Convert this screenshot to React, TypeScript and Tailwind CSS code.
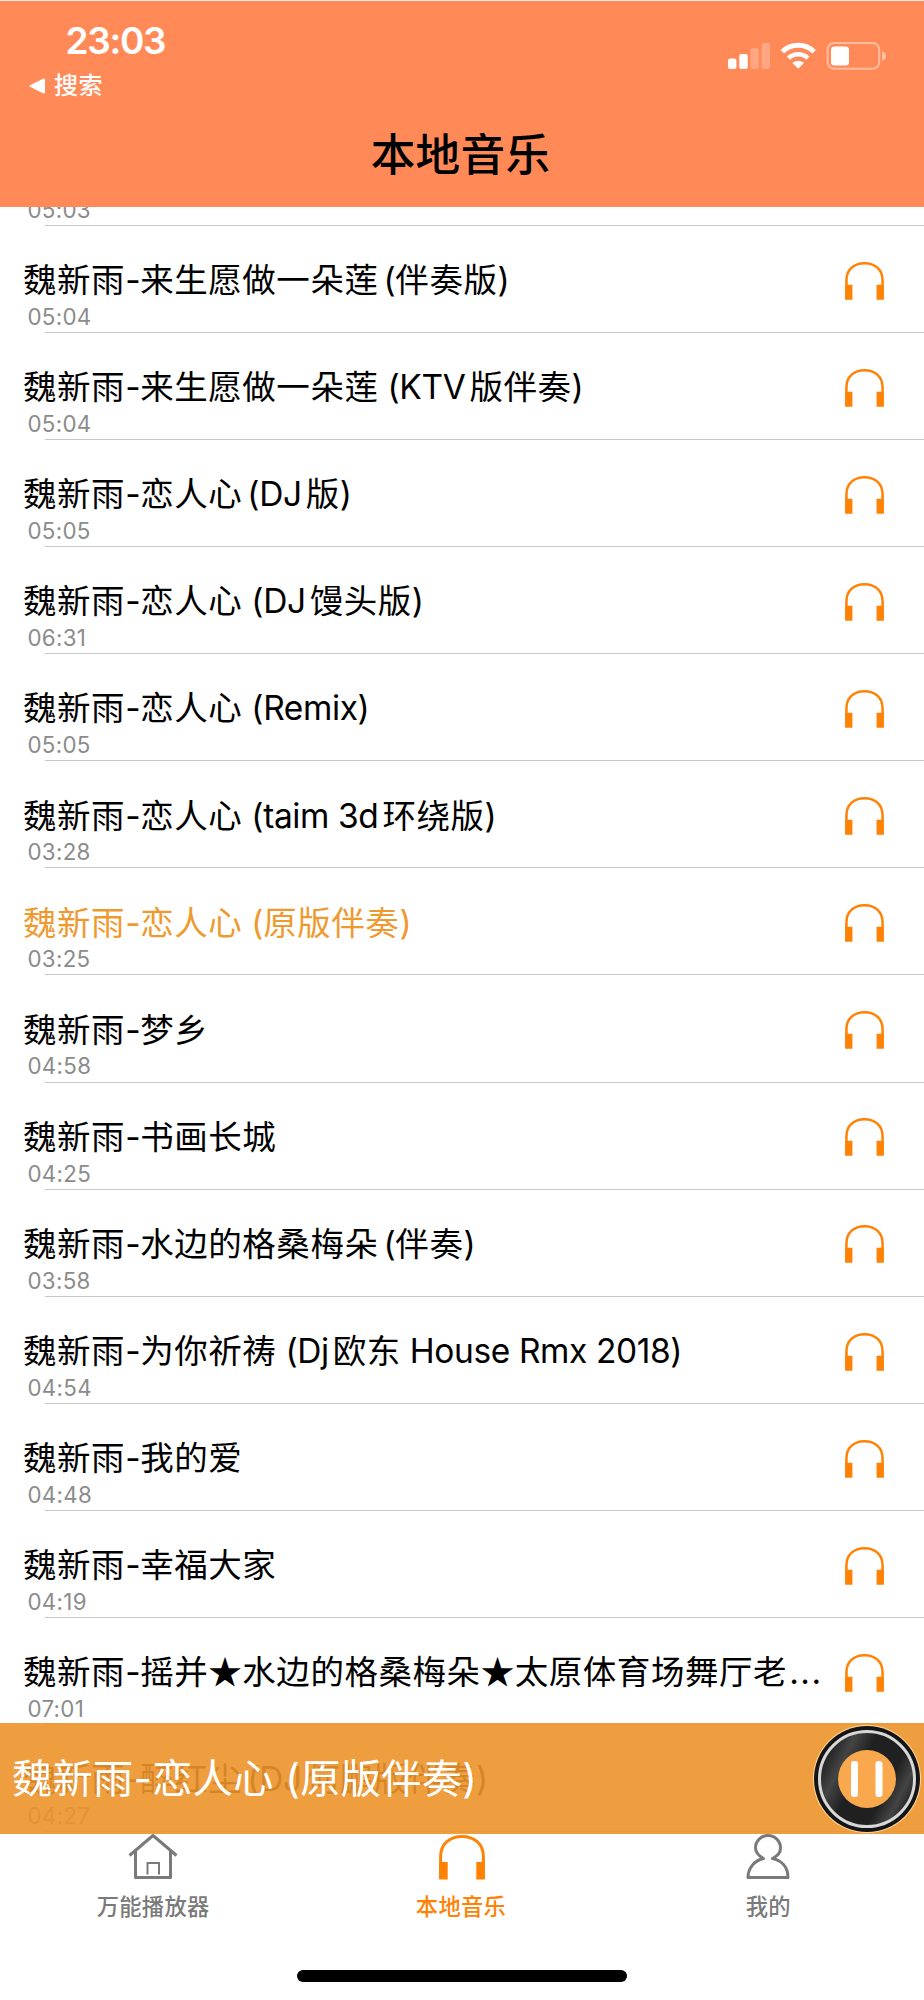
const songs = [
  ["魏新雨-来生愿做一朵莲", "05:03"],
  ["魏新雨-来生愿做一朵莲(伴奏版)", "05:04"],
  ["魏新雨-来生愿做一朵莲 (KTV版伴奏)", "05:04"],
  ["魏新雨-恋人心(DJ版)", "05:05"],
  ["魏新雨-恋人心 (DJ馒头版)", "06:31"],
  ["魏新雨-恋人心 (Remix)", "05:05"],
  ["魏新雨-恋人心 (taim 3d环绕版)", "03:28"],
  ["魏新雨-恋人心 (原版伴奏)", "03:25"],
  ["魏新雨-梦乡", "04:58"],
  ["魏新雨-书画长城", "04:25"],
  ["魏新雨-水边的格桑梅朵(伴奏)", "03:58"],
  ["魏新雨-为你祈祷 (Dj欧东 House Rmx 2018)", "04:54"],
  ["魏新雨-我的爱", "04:48"],
  ["魏新雨-幸福大家", "04:19"],
  ["魏新雨-摇并★水边的格桑梅朵★太原体育场舞厅老...", "07:01"],
  ["魏新雨-醉红尘(DJ何鹏版伴奏)", "04:27"],
];
const playing = 7;

// Splits a title into Latin and Chinese runs so each script gets its own tracking.
function MixedText({ text }: { text: string }) {
  const runs = text.match(/[\x20-\x7e]+|[^\x20-\x7e]+/g) ?? [];
  return (
    <>
      {runs.map((run, i) => {
        if (run === "...") return <span key={i} className="ml-[2px] tracking-[1.5px]">{run}</span>;
        if (run.charCodeAt(0) > 126) return <span key={i} className="font-['Noto_Sans_CJK_SC',sans-serif] tracking-[0.55px]">{run}</span>;
        const before = run.startsWith("(") ? "ml-[5px]" : "";
        const after = /[A-Za-z]$/.test(run) ? "mr-[4px]" : "";
        return <span key={i} className={`tracking-[-0.4px] ${before} ${after}`}>{run}</span>;
      })}
    </>
  );
}

function Headphones({ className }: { className: string }) {
  return (
    <svg viewBox="0 0 46 45" className={className} fill="none">
      <path d="M1.6 44V22C1.600 8.500 11 1.500 23 1.500S44.400 8.500 44.400 22v22" stroke="#ff8205" strokeWidth="3" />
      <path d="M.3 27h8.400v17.600H.3zM37.300 27h8.400v17.600h-8.400z" fill="#ff8205" />
    </svg>
  );
}

function StatusIcons() {
  return (
    <svg viewBox="0 0 160 30" className="h-[30px] w-[160px]">
      <g fill="#fff">
        <rect x="0" y="17.5" width="8.4" height="10.6" rx="2" />
        <rect x="11.3" y="13" width="8.4" height="15.100" rx="2" />
        <g opacity=".25">
          <rect x="22.4" y="7.3" width="8.4" height="20.8" rx="2" />
          <rect x="33.600" y="2" width="8.400" height="26.100" rx="2" />
        </g>
        <path d="M70.200 27.700L64.700 22.300Q64.500 21.700 65.200 21.200Q70.200 18.200 75.200 21.200Q75.900 21.700 75.700 22.300z" />
      </g>
      <g fill="none" stroke="#fff">
        <path d="M54.300 10.800a22.800 22.800 0 0 1 31.800 0" strokeWidth="5" />
        <path d="M60.500 17.200a14 14 0 0 1 19.400 0" strokeWidth="4.600" />
      </g>
      <rect x="99.6" y="2.1" width="51.600" height="25.600" rx="6.500" fill="none" stroke="#fff" strokeOpacity=".42" strokeWidth="2" />
      <rect x="103" y="5.400" width="18" height="19" rx="3.500" fill="#fff" />
      <path d="M154.200 10.500q3.600 1 3.600 4.600t-3.600 4.600z" fill="#fff" opacity=".5" />
    </svg>
  );
}

export default function App() {
  return (
    <div className="relative flex h-[2000px] w-[924px] flex-col overflow-hidden bg-white font-['Inter','Noto_Sans_CJK_SC',sans-serif] text-black">
      <header className="z-10 flex h-[207px] shrink-0 flex-col border-t border-[#f3ebe7] bg-[#ff8a58] text-white">
        <div className="flex h-[70px] justify-between pl-[65.5px] pr-[36px]">
          <span className="pt-[16px] text-[37px] leading-[48px] font-semibold tracking-[-1.3px]">23:03</span>
          <div className="pt-[40px]"><StatusIcons /></div>
        </div>
        <div className="flex h-[30px] items-center gap-[9px] pl-[29px]">
          <svg viewBox="0 0 16 16" className="size-4"><path d="M1.5 7L14 .7Q16 0 16 2v12q0 2-2 1.300L1.500 9Q-.5 8 1.500 7z" fill="#fff" /></svg>
          <span className="text-[24px] leading-[30px] font-medium tracking-[0.4px]">搜索</span>
        </div>
        <h1 className="mt-[22px] pr-[3px] text-center text-[44.6px] leading-[64px] font-medium tracking-[0.3px] text-black">本地音乐</h1>
      </header>

      <main className="-mt-[88.3px] flex-1">
        {songs.map(([title, time], i) => (
          <div key={i} className="flex h-[107.1px] flex-col pl-[23px] pt-[31.8px]">
            <div className="flex h-[46px] items-center justify-between pr-[40px]">
              <span className={`mb-[3px] text-[33.5px] leading-[46px] whitespace-nowrap ${i === playing ? "text-[#ef9a2f]" : "text-black"}`}>
                <MixedText text={title} />
              </span>
              <Headphones className="h-[38px] w-[39px] shrink-0" />
            </div>
            <span className="mt-[1.2px] ml-[4.500px] text-[22.3px] leading-[24px] tracking-[0.3px] text-[#8b8b8b]">{time}</span>
            <div className="mt-auto ml-[22px] h-px bg-[#c8c8c8]" />
          </div>
        ))}
      </main>

      <div className="absolute left-0 top-[1723px] flex h-[111px] w-full items-center justify-between bg-[#ec942a]/90 pl-[12px] pr-[3px]">
        <span className="text-[40.2px] leading-[56px] tracking-[0.3px] text-white">魏新雨-恋人心 (原版伴奏)</span>
        <svg viewBox="0 0 108 108" className="size-[108px]">
          <defs>
            <linearGradient id="disc" x1="0" y1=".25" x2="1" y2=".75">
              <stop offset="0" stopColor="#181818" />
              <stop offset=".22" stopColor="#444" />
              <stop offset=".4" stopColor="#202020" />
              <stop offset=".7" stopColor="#202020" />
              <stop offset=".85" stopColor="#444" />
              <stop offset="1" stopColor="#181818" />
            </linearGradient>
          </defs>
          <circle cx="54" cy="54" r="54" fill="#ffd79c" />
          <circle cx="54" cy="54" r="53" fill="#151515" />
          <circle cx="54" cy="54" r="47.5" fill="url(#disc)" stroke="#d8d8d8" strokeWidth="3" />
          <circle cx="54" cy="54" r="29" fill="#f9a84e" />
          <rect x="38" y="36" width="7" height="36" rx="3" fill="#fff" />
          <rect x="62.5" y="36" width="7" height="36" rx="3" fill="#fff" />
        </svg>
      </div>

      <footer className="absolute bottom-0 left-0 h-[166px] w-full bg-white text-[#7a7a7a]">
        <nav className="grid w-[922px] grid-cols-3 text-[22.3px] leading-[30px] tracking-[0.3px]">
          <div className="flex flex-col items-center pr-px">
            <svg viewBox="0 0 50 46" className="h-[46px] w-[50px]" fill="none" stroke="#7a7a7a" strokeWidth="3">
              <path d="M1.500 21.500L25 1.500l23.500 20M7.500 17v26.500h35V17" strokeLinejoin="round" />
              <path d="M19.500 40.500V29h11.500v11.500" strokeWidth="2" />
            </svg>
            <span className="mt-[12px] font-medium">万能播放器</span>
          </div>
          <div className="flex flex-col items-center text-[#ff8205]">
            <Headphones className="mt-px ml-[2px] h-[45px] w-[46px]" />
            <span className="mt-[12px] font-medium">本地音乐</span>
          </div>
          <div className="flex flex-col items-center">
            <svg viewBox="0 0 44 46" className="h-[46px] w-[44px]" fill="none" stroke="#7a7a7a" strokeWidth="3" strokeLinejoin="round">
              <path d="M17.500 24.500C14 22.500 9.500 19.500 9.500 14a12.500 12.500 0 0 1 25 0C34.500 19.500 30.500 22.500 26.500 24.500C35.500 26.500 42 33 42 43.500H2C2 34 8.500 26.500 17.500 24.500z" />
            </svg>
            <span className="mt-[12px] font-medium">我的</span>
          </div>
        </nav>
        <div className="absolute bottom-[18px] left-[297px] h-[12px] w-[330px] rounded-full bg-black" />
      </footer>
    </div>
  );
}
